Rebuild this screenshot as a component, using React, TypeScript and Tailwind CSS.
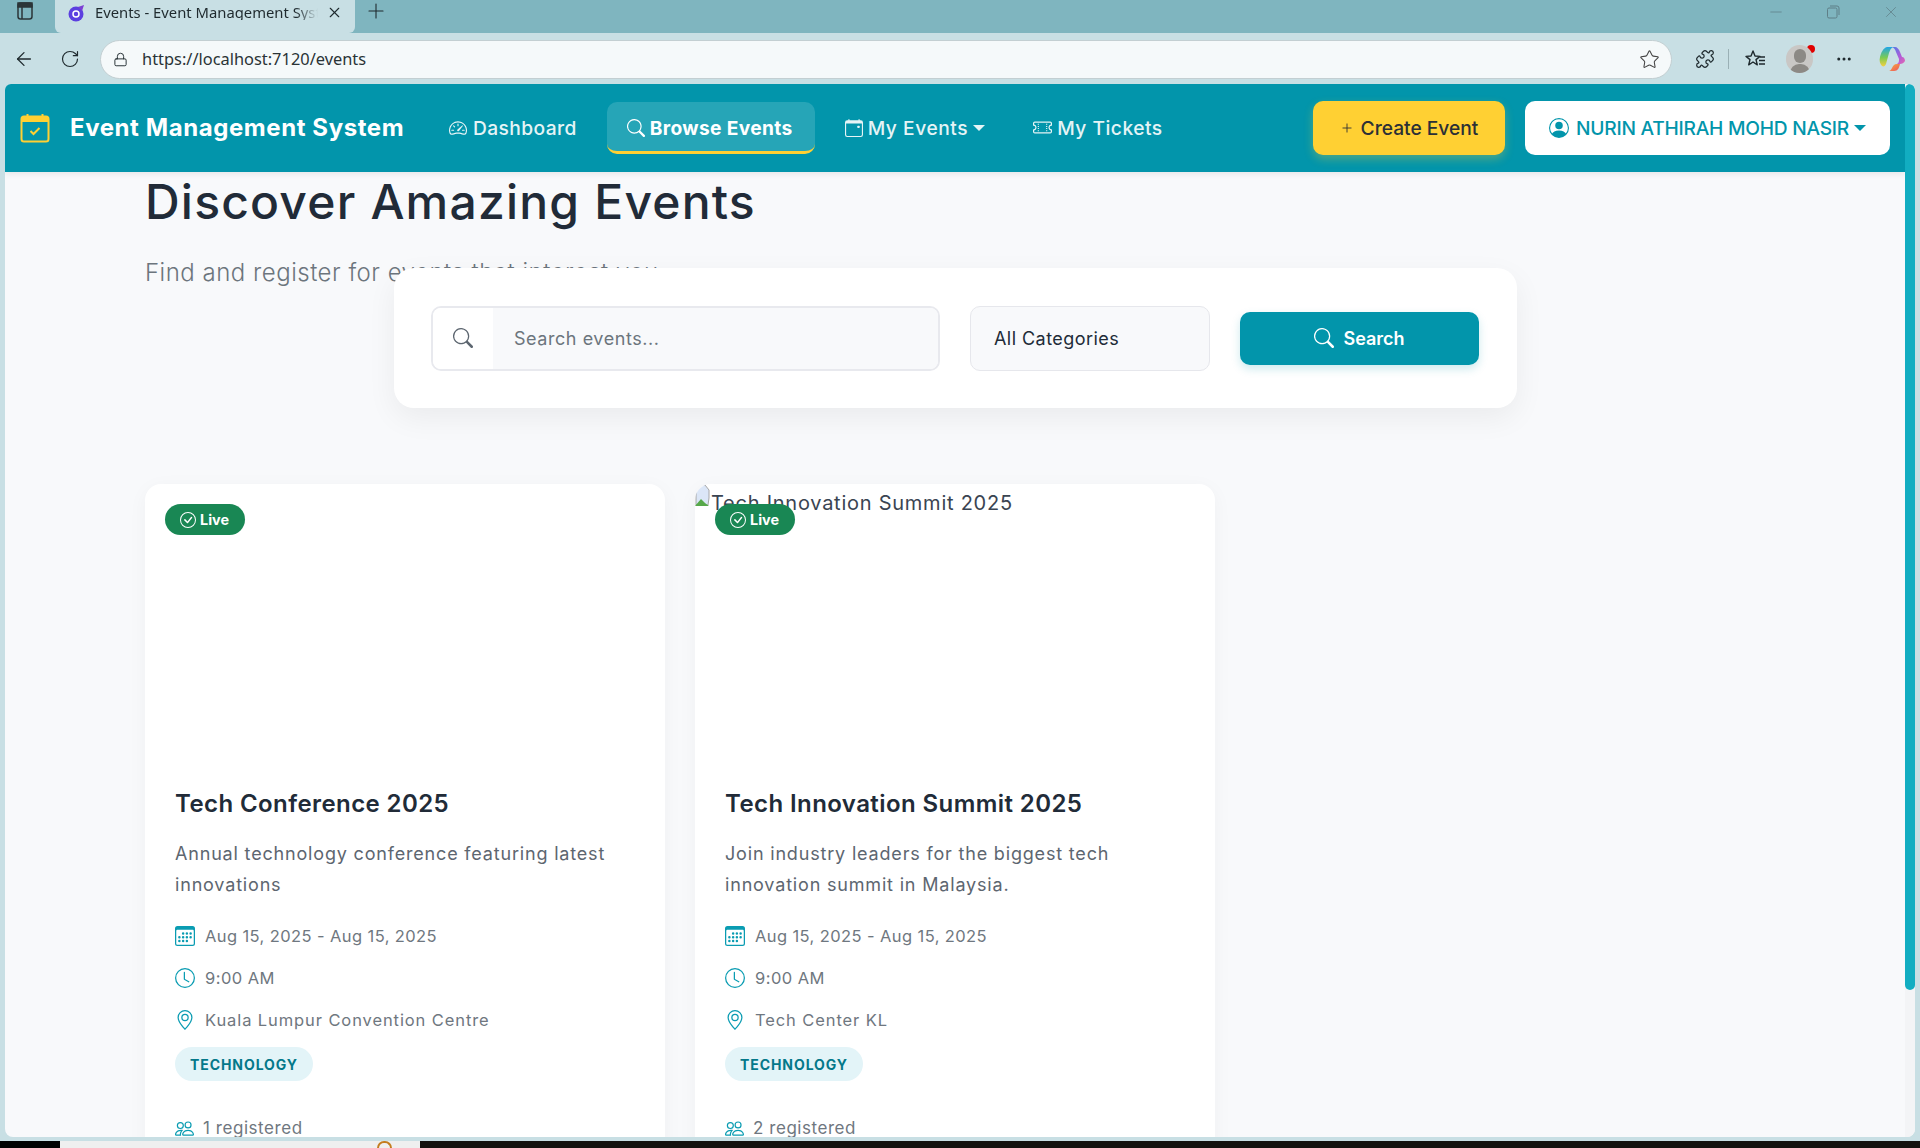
import React from "react";
import { Plus, ArrowLeft, RotateCw, Lock, Star, Puzzle, MoreHorizontal, Minus, X } from "lucide-react";
import { BsCalendar3, BsClock, BsGeoAlt, BsPeople, BsSearch, BsSpeedometer2, BsCalendarEvent, BsTicketPerforated, BsPersonCircle, BsCheckCircle } from "react-icons/bs";

const body = "font-['Inter','Liberation_Sans',sans-serif]";

function Caret({ className = "" }: { className?: string }) {
  return (
    <svg width="12" height="6" viewBox="0 0 12 6" className={className}>
      <path d="M0 0h12L6 6z" fill="currentColor" />
    </svg>
  );
}

function Card({ title, desc, place, count, broken }: { title: string; desc: string; place: string; count: string; broken?: boolean }) {
  return (
    <div className="w-[520px] h-[800px] bg-white rounded-[16px] shadow-[0_4px_20px_rgba(0,0,0,0.04)] shrink-0 overflow-hidden">
      <div className="relative h-[280px]">
        {broken && (
          <div className="flex items-start text-[20px] text-[#3a4452] leading-[30px] tracking-[0.75px]">
            <svg width="16" height="22" viewBox="0 0 16 22" className="shrink-0 mt-[1px]">
              <path d="M4 0h6l4 5v8l-1 7H1V2z" fill="#dbe6f7" stroke="#a6a6a6" strokeWidth="1" />
              <path d="M0 21l6-7 4 4 4 3z" fill="#57a84a" />
            </svg>
            <span className="mt-[4px]">Tech Innovation Summit 2025</span>
          </div>
        )}
        <div className="absolute left-[20px] top-[20px] h-[31px] w-[80px] pl-[15px] rounded-full bg-[#198754] text-white text-[14.4px] font-bold flex items-center gap-[4px]">
          <BsCheckCircle size={16} />
          Live
        </div>
      </div>
      <div className="px-[30px] pt-[22px]">
        <h3 className="text-[24px] leading-[36px] font-semibold text-[#212b38] tracking-[0.42px]">{title}</h3>
        <p className="mt-[16px] text-[18px] leading-[31px] text-[#5d6670] tracking-[0.82px]">{desc}</p>
        <div className="mt-[15px] flex flex-col text-[16.5px] text-[#6f7780]">
          <div className="h-[42px] flex items-center gap-[10px]"><BsCalendar3 size={20} className="text-[#0a9cb2]" /><span className="tracking-[0.4px]">Aug 15, 2025 - Aug 15, 2025</span></div>
          <div className="h-[42px] flex items-center gap-[10px]"><BsClock size={20} className="text-[#0a9cb2]" /><span className="tracking-[0.45px]">9:00 AM</span></div>
          <div className="h-[42px] flex items-center gap-[10px]"><BsGeoAlt size={20} className="text-[#0a9cb2]" /><span className="tracking-[0.9px]">{place}</span></div>
        </div>
        <div className="mt-[6px] inline-flex items-center h-[34px] px-[15px] rounded-full bg-[#e3f4f8] text-[#04788a] text-[14px] font-bold tracking-[0.92px]">TECHNOLOGY</div>
        <div className="mt-[35px] flex items-center gap-[9px] text-[17px] text-[#6f7780] tracking-[0.55px]">
          <BsPeople size={19} className="text-[#0a9cb2]" />
          <span>{count}</span>
        </div>
      </div>
    </div>
  );
}

export default function App() {
  return (
    <div className="w-[1920px] h-[1148px] overflow-hidden flex flex-col bg-[#c8dfe4] font-['Noto_Sans',sans-serif]">
      {/* Tab strip */}
      <div className="h-[33px] shrink-0 bg-[#7fb5bf] flex text-[#1f2a2e]">
        <div className="w-[55px] h-full flex items-start justify-center pt-[2px] pr-[6px]">
          <svg width="16" height="18" viewBox="0 0 16 18" fill="none" stroke="#2b3538" strokeWidth="1.5"><rect x="1" y="1" width="14" height="16" rx="2.5" /><path d="M5 5v12" /><path d="M1 1h14v4H1z" fill="#2b3538" /></svg>
        </div>
        <div className="w-[300px] h-full bg-[#c8dfe4] rounded-b-[6px] flex items-start pt-[3px] pl-[9px] pr-[12px]">
          <div className="ml-[4px] mt-[1px] w-[18px] h-[18px] shrink-0">
            <svg width="18" height="18" viewBox="0 0 18 18"><circle cx="8" cy="10" r="7.5" fill="#5b3fe0" /><circle cx="8" cy="10" r="3" fill="none" stroke="#fff" strokeWidth="1.5" /><path d="M10 3l6-2-2 6z" fill="#7c3fd4" /></svg>
          </div>
          <span className="ml-[9px] text-[14.8px] leading-[16px] pt-[1px] whitespace-nowrap overflow-hidden w-[223px] [mask-image:linear-gradient(to_right,black_90%,transparent)]">Events - Event Management System</span>
          <X size={17} strokeWidth={1.6} className="ml-auto shrink-0 mt-[1px]" />
        </div>
        <Plus size={24} strokeWidth={1.1} className="ml-[9px] -mt-[1px]" />
        <div className="ml-auto flex items-start pt-[3px] text-[#5f7f87]">
          <Minus size={18} strokeWidth={1} />
          <svg width="14" height="14" viewBox="0 0 14 14" fill="none" stroke="#5f7f87" className="ml-[41px] mt-[2px]"><rect x="1.5" y="3" width="9.5" height="10" rx="1.5" /><path d="M4 1h7a2 2 0 0 1 2 2v7" /></svg>
          <X size={18} strokeWidth={1} className="ml-[42px] mr-[20px]" />
        </div>
      </div>
      {/* Address bar */}
      <div className="h-[51px] shrink-0 flex items-center pl-[13px] pt-[1px] text-[#1f2a2e]">
        <ArrowLeft size={22} strokeWidth={1.4} />
        <RotateCw size={20} strokeWidth={1.4} className="ml-[25px]" />
        <div className="ml-[20px] w-[1572px] h-[39px] rounded-full bg-[#f5f9fa] border border-[#c3cfd2] flex items-center pl-[12px] pr-[11px]">
          <Lock size={15} strokeWidth={1.5} />
          <span className="ml-[14px] text-[16.4px] text-[#2a3336]">https://localhost:7120/events</span>
          <Star size={21} strokeWidth={1.2} className="ml-auto text-[#444]" />
        </div>
        <Puzzle size={20} strokeWidth={1.5} className="ml-[23px]" />
        <div className="w-px h-[20px] bg-[#9ab0b5] ml-[13px]" />
        <svg width="21" height="20" viewBox="0 0 21 20" fill="none" stroke="#1f2a2e" strokeWidth="1.4" className="ml-[16px]">
          <path d="M8 2l2 5 5 .4-4 3.2 1.3 5.2L8 13l-4.3 2.8L5 10.6 1 7.4 6 7z" strokeLinejoin="round" />
          <path d="M15 8h5M14 11.500h6M14 15h6" />
        </svg>
        <div className="relative ml-[20px] w-[27px] h-[28px] rounded-full bg-[#c9c7c5] overflow-hidden flex flex-col items-center justify-end">
          <div className="w-[12px] h-[14px] rounded-full bg-[#8c8985] mb-[1px]" />
          <div className="w-[20px] h-[9px] rounded-t-full bg-[#8c8985]" />
        </div>
        <div className="w-[8px] h-[8px] rounded-full bg-[#e00000] -ml-[6px] -mt-[20px]" />
        <MoreHorizontal size={18} className="ml-[20px]" />
        <svg width="27" height="26" viewBox="0 0 27 26" className="ml-[26px]">
          <defs>
            <linearGradient id="copA" x1="0" y1="0" x2="0" y2="1"><stop offset="0" stopColor="#1fa5e8" /><stop offset="0.55" stopColor="#7ccb52" /><stop offset="1" stopColor="#f4d03f" /></linearGradient>
            <linearGradient id="copB" x1="0" y1="0" x2="1" y2="1"><stop offset="0" stopColor="#4d7be8" /><stop offset="0.6" stopColor="#b25ad8" /><stop offset="1" stopColor="#e36ab0" /></linearGradient>
            <linearGradient id="copC" x1="0" y1="0" x2="1" y2="1"><stop offset="0" stopColor="#f5b13d" /><stop offset="1" stopColor="#ee4f5c" /></linearGradient>
          </defs>
          <path d="M8 1h6c-2 1-3 3-4 6l-3 11c-1 2-2 3-4 2-2-2-3-5-2-9C2 7 4 2 8 1z" fill="url(#copA)" />
          <path d="M13 1h3c2 0 4 2 5 5l2 5c2 0 3 2 3 4-1 2-3 3-5 3h-3c2-1 2-3 2-5L17 6c-1-3-2-4-4-5z" fill="url(#copB)" />
          <path d="M10 25h5c4 0 5-3 6-7h-3c-3 0-4 2-5 4-1 2-2 3-3 3z" fill="url(#copC)" />
        </svg>
      </div>
      {/* Viewport */}
      <div className="h-[1053px] shrink-0 mx-[5px] flex rounded-b-[8px] rounded-t-[6px] overflow-hidden bg-[#f8f9fb]">
        <div className="flex-1 min-w-0 flex flex-col overflow-hidden">
          <nav className={`h-[88px] shrink-0 bg-[#0295ab] flex items-center pl-[15px] text-[19.2px] shadow-[0_2px_6px_rgba(0,0,0,0.08)] relative z-10 ${body}`}>
            <svg width="30" height="30" viewBox="0 0 30 30" fill="none" className="shrink-0">
              <rect x="1.5" y="3.500" width="27" height="25" rx="2.5" stroke="#ffd033" strokeWidth="2" />
              <path d="M1.500 6A2.500 2.500 0 0 1 4 3.500h22A2.500 2.500 0 0 1 28.500 6v3h-27z" fill="#ffd033" />
              <path d="M7.500 1v4M22.500 1v4" stroke="#ffd033" strokeWidth="2" />
              <path d="M10.500 18l3 3 6-6" stroke="#ffd033" strokeWidth="2" />
            </svg>
            <span className="ml-[20px] w-[334px] shrink-0 text-[24px] font-bold text-white whitespace-nowrap tracking-[0.58px]">Event Management System</span>
            <div className="ml-[45px] flex items-center gap-[6px] text-[#e5f4f6] font-medium tracking-[0.4px]">
              <BsSpeedometer2 size={18} />
              <span>Dashboard</span>
            </div>
            <div className="ml-[30px] h-[52px] w-[208px] pl-[20px] pt-[3px] rounded-[10px] border-b-[3px] border-[#ffd033] bg-[#26a5b7] text-white font-bold flex items-center gap-[5px] whitespace-nowrap tracking-[0.35px]">
              <BsSearch size={18} />Browse Events
            </div>
            <div className="ml-[30px] flex items-center gap-[5px] text-[#e5f4f6] font-medium tracking-[0.55px]">
              <BsCalendarEvent size={18} />
              My Events<Caret className="ml-[0px]" />
            </div>
            <div className="ml-[48px] flex items-center gap-[5px] text-[#e5f4f6] font-medium tracking-[0.5px]">
              <BsTicketPerforated size={19} />
              My Tickets
            </div>
            <div className="ml-auto h-[54px] w-[192px] rounded-[10px] bg-[#ffd033] text-[#2b2f36] font-medium flex items-center justify-center gap-[7px] shadow-[0_4px_10px_rgba(255,208,51,0.3)]">
              <Plus size={14} strokeWidth={1.5} />Create Event
            </div>
            <div className="ml-[20px] mr-[15px] h-[54px] w-[365px] rounded-[10px] bg-white text-[#0295ab] font-medium flex items-center justify-center gap-[7px] whitespace-nowrap tracking-[-0.25px]">
              <BsPersonCircle size={20} className="shrink-0" />
              NURIN ATHIRAH MOHD NASIR<Caret className="ml-[-2px]" />
            </div>
          </nav>
          <main className={`flex-1 min-h-0 overflow-hidden pl-[140px] ${body}`}>
            <h1 className="mt-[1px] text-[48px] leading-[58px] font-medium text-[#212b38] tracking-[1.2px]">Discover Amazing Events</h1>
            <p className="mt-[24px] text-[24px] leading-[36px] font-light text-[#6c757d] tracking-[0.5px]">Find and register for events that interest you</p>
            <div className="relative -mt-[23px] ml-[249px] w-[1123px] h-[140px] rounded-[20px] bg-white shadow-[0_10px_30px_rgba(0,0,0,0.06)] flex items-center pl-[37px] pr-[38px]">
              <div className="w-[509px] h-[65px] rounded-[10px] border-2 border-[#e8e9ee] flex overflow-hidden">
                <div className="w-[60px] flex items-center justify-center bg-white"><BsSearch size={20} className="text-[#5d6670]" /></div>
                <div className="flex-1 flex items-center pl-[21px] bg-[#f8f9fb] text-[18px] text-[#6c757d] tracking-[0.55px]">Search events...</div>
              </div>
              <div className="ml-[30px] w-[240px] h-[65px] rounded-[10px] border border-[#e6e7ec] bg-[#f8f9fb] flex items-center pl-[23px] text-[18px] text-[#212b38] tracking-[0.45px]">All Categories</div>
              <div className="ml-[30px] w-[239px] h-[53px] rounded-[10px] bg-[#0295ab] text-white text-[18px] font-semibold flex items-center justify-center gap-[9px] shadow-[0_4px_10px_rgba(2,149,171,0.2)]">
                <BsSearch size={20} />Search
              </div>
            </div>
            <div className="mt-[76px] flex gap-[30px]">
              <Card title="Tech Conference 2025" desc="Annual technology conference featuring latest innovations" place="Kuala Lumpur Convention Centre" count="1 registered" />
              <Card broken title="Tech Innovation Summit 2025" desc="Join industry leaders for the biggest tech innovation summit in Malaysia." place="Tech Center KL" count="2 registered" />
            </div>
          </main>
        </div>
        <div className="w-[10px] shrink-0 bg-[#f3f4f6] flex flex-col">
          <div className="h-[906px] bg-[#12adc1] rounded-full" />
        </div>
      </div>
      {/* Desktop strip */}
      <div className="mt-[4px] flex-1 flex">
        <div className="w-[60px] bg-black" />
        <div className="w-[360px] bg-[#efefef] flex justify-end pr-[28px]">
          <div className="w-[15px] h-[7px] rounded-t-full border-2 border-b-0 border-[#c47d1f]" />
        </div>
        <div className="flex-1 bg-[#14120f]" />
      </div>
    </div>
  );
}
